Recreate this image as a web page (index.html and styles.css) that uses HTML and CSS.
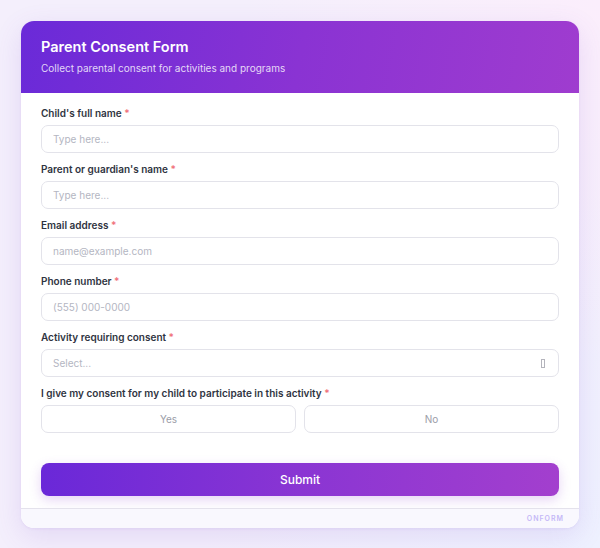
FILE: index.html
```html
<!DOCTYPE html>
<html lang="en">
<head>
<meta charset="UTF-8">
<title>Parent Consent Form</title>
<link rel="stylesheet" href="styles.css">
</head>
<body>
<div class="page">
  <form class="card">
    <div class="card-head">
      <h1>Parent Consent Form</h1>
      <p>Collect parental consent for activities and programs</p>
    </div>
    <div class="card-body">
      <div class="field">
        <label>Child's full name <span class="req">*</span></label>
        <input type="text" placeholder="Type here...">
      </div>
      <div class="field">
        <label>Parent or guardian's name <span class="req">*</span></label>
        <input type="text" placeholder="Type here...">
      </div>
      <div class="field">
        <label>Email address <span class="req">*</span></label>
        <input type="email" placeholder="name@example.com">
      </div>
      <div class="field">
        <label>Phone number <span class="req">*</span></label>
        <input type="tel" placeholder="(555) 000-0000">
      </div>
      <div class="field">
        <label>Activity requiring consent <span class="req">*</span></label>
        <div class="select">
          <span>Select...</span>
          <i class="tofu"></i>
        </div>
      </div>
      <div class="field">
        <label>I give my consent for my child to participate in this activity <span class="req">*</span></label>
        <div class="choices">
          <button type="button">Yes</button>
          <button type="button">No</button>
        </div>
      </div>
      <button type="submit" class="submit">Submit</button>
    </div>
    <div class="card-foot">ONFORM</div>
  </form>
</div>
</body>
</html>
```

FILE: styles.css
```css
* { box-sizing: border-box; }
html, body { height: 100%; }
body {
  margin: 0;
  font-family: Inter, "Noto Sans", sans-serif;
  background:
    radial-gradient(circle at 100% 0%, #fbeefc 0, rgba(251,238,252,0) 45%),
    radial-gradient(circle at 100% 100%, #eef1ff 0, rgba(238,241,255,0) 50%),
    #f4effc;
}
.page { padding: 21px 21px 0 21px; }
.card {
  display: flex;
  flex-direction: column;
  background: #fff;
  border-radius: 13px;
  overflow: hidden;
  box-shadow: 0 8px 28px rgba(120, 70, 200, 0.14), 0 1px 3px rgba(120, 70, 200, 0.08);
}
.card-head {
  height: 72px;
  padding: 17px 20px 0 20px;
  color: #fff;
  background: linear-gradient(100deg, #6a2ad8 0%, #8a33d3 50%, #9f3ccf 100%);
}
.card-head h1 {
  margin: 0;
  font-size: 14.5px;
  font-weight: 600;
  line-height: 18px;
}
.card-head p {
  margin: 5px 0 0 0;
  font-size: 10px;
  line-height: 14px;
  color: rgba(255, 255, 255, 0.82);
}
.card-body {
  padding: 12px 20px 12px 20px;
  display: flex;
  flex-direction: column;
  gap: 8px;
}
.field { display: flex; flex-direction: column; }
.field label {
  font-size: 10px;
  line-height: 16px;
  font-weight: 600;
  color: #2f3441;
  margin-bottom: 4px;
}
.req { color: #f0727a; }
.field input, .select, .choices button {
  height: 28px;
  border: 1.5px solid #e3e3ea;
  border-radius: 7px;
  background: #fff;
  font-family: inherit;
  font-size: 10px;
  padding: 0 11px;
  color: #2f3441;
  outline: none;
}
.field input::placeholder { color: #b4b6c2; }
.select {
  display: flex;
  align-items: center;
  justify-content: space-between;
  color: #b4b6c2;
}
.tofu {
  width: 4px;
  height: 9px;
  border: 1px solid #b4b4bc;
  margin-right: 2px;
}
.choices { display: flex; gap: 8px; }
.choices button {
  flex: 1;
  color: #9b9da8;
  cursor: pointer;
}
.submit {
  margin-top: 22px;
  height: 33px;
  border: none;
  border-radius: 8px;
  color: #fff;
  font-family: inherit;
  font-size: 12px;
  font-weight: 500;
  background: linear-gradient(90deg, #6a28d8 0%, #8a35d3 50%, #a33fce 100%);
  box-shadow: 0 4px 12px rgba(140, 60, 210, 0.22);
  cursor: pointer;
}
.card-foot {
  height: 20px;
  border-top: 1px solid #e4e2ec;
  background: #f9f8fe;
  padding: 0 15px;
  text-align: right;
  font-size: 7px;
  line-height: 19px;
  letter-spacing: 1px;
  font-weight: 600;
  color: #c5b8f7;
}
```
